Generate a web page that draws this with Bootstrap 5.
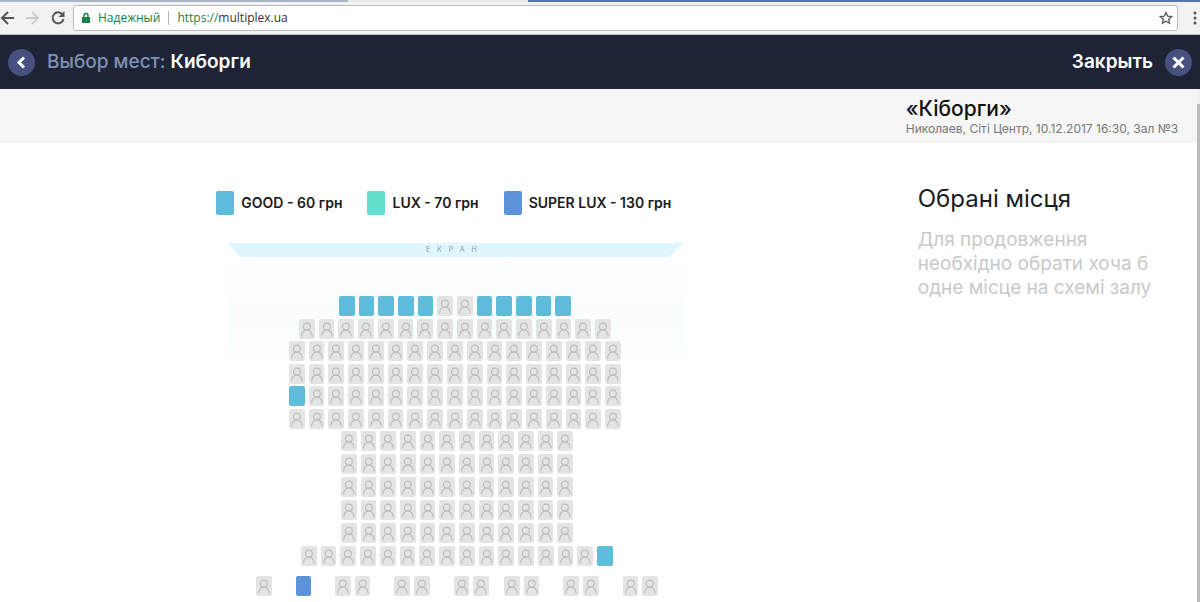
<!DOCTYPE html>
<html lang="uk">
<head>
<meta charset="utf-8">
<meta name="viewport" content="width=device-width, initial-scale=1">
<title>Выбор мест: Киборги</title>
<link href="https://cdn.jsdelivr.net/npm/bootstrap@5.3.0/dist/css/bootstrap.min.css" rel="stylesheet">
<style>
body{font-family:Inter,"Noto Sans",sans-serif;background:#fefefe;color:#1b1b1f;overflow:hidden}
svg{display:block}
/* browser window */
.tabstrip{height:2px;background:#e9ebee}
.tab-off{width:29%;background:#aab6c3}
.tab-rest{width:56%;background:#5577ad}
.toolbar{height:33px;background:#f2f2f2;border-bottom:1px solid #c3c3c8;font-family:"Open Sans",sans-serif;font-size:12px}
.toolbar button,.appbar button{border:0;background:none;padding:0}
.nav-tools{gap:10px}
.omnibox{height:26px;background:#fff;border:1px solid #bcbcbc;border-radius:3px;color:#1a8044}
.omnibox input{border:0;outline:0;padding:0;background:none;color:#333}
.sep{width:1px;height:14px;background:#b5b5b5}
/* site header */
.appbar{height:54px;background:#1f2336;font-size:19px}
.appbar h1{font-size:19px;font-weight:500;color:#7e93b3}
.appbar b{color:#fff;font-weight:600}
.appbar .disc{width:27px;height:27px;border-radius:50%;background:#47507f}
.infobar{height:54px;background:#f6f6f6}
.side{width:24%}
.infobar .side{width:25%;padding-left:8px}
.infobar h2{font-size:21px;line-height:24px;font-weight:500;color:#111}
.infobar p{font-size:12px;line-height:15px;color:#777}
.side h3{margin-top:41px;font-size:24px;line-height:30px;font-weight:400}
.side .hint{padding-top:14px;font-size:19px;line-height:24px;color:#c9c9c9}
.scrolltrack{width:3px;padding-top:15px;background:#f1f1f1}
.scrollthumb{background:#bcbcbc}
/* legend, screen, seats */
.legend{gap:25px;padding-right:22px;font-size:14px;font-weight:600;line-height:24px;color:#1b1b1b}
.legend div{gap:7px}
.swatch{width:18px;height:24px;border-radius:2px}
.good{background:#5fbcdb}
.lux{background:#62decf}
.super{background:#5c93db}
.screen-bar{width:456px;height:14px;margin-top:28px;background:#def6fd;clip-path:polygon(0 0,100% 0,97% 100%,3% 100%);font-size:7px;letter-spacing:7px;line-height:14px;color:#8a9ba3;text-align:center}
.glow{width:456px;padding-top:39px;background:linear-gradient(#fefefe,#fafdff 50px,#fbfeff 92px,#fefefe 110px)}
.block-a{height:133px}
.block-b{height:66px;padding-left:4px}
.mid{margin-top:2px}
.low{margin-top:3px}
.last{margin-top:10px;padding-left:4px}
.seats{display:flex;gap:4px}
.n12{width:232px}.n16{width:312px}.n17{width:332px}.nlast{width:402px}
.seat{flex:1 1 0;min-width:0;height:20px;border:0;padding:0;border-radius:2px;overflow:hidden}
.taken{background:#e4e4e4}
.taken svg{width:100%;height:20px}
.aisle{width:16px}
.aisle-s{width:7px}
</style>
</head>
<body>
<div class="d-flex flex-column min-vh-100">
  <div class="tabstrip d-flex justify-content-between"><div class="tab-off"></div><div class="tab-rest"></div></div>
  <div class="toolbar d-flex align-items-center">
    <div class="nav-tools d-flex">
      <button aria-label="Назад"><svg width="15" height="16" fill="none" stroke="#555" stroke-width="2"><path d="M14 8H2M8 2L2 8l6 6"/></svg></button>
      <button aria-label="Вперед"><svg width="15" height="16" fill="none" stroke="#ccc" stroke-width="2"><path d="M1 8h12M7 2l6 6-6 6"/></svg></button>
      <button aria-label="Обновить"><svg width="15" height="16" fill="none" stroke="#555" stroke-width="2"><path d="M12.500 4.500A5.500 5.500 0 1 0 13.500 9"/><path d="M14.500 1v6h-6z" fill="#555" stroke="none"/></svg></button>
    </div>
    <div class="omnibox d-flex align-items-center flex-grow-1 ms-2 ps-2 pe-1 me-2">
      <svg width="8" height="12" fill="none"><path d="M2 6V3.500a2 2 0 0 1 4 0V6" stroke="#1a8044" stroke-width="1.500"/><path d="M0 5h8v6H0z" fill="#1a8044"/></svg>
      <span class="ms-2">Надежный</span><span class="sep ms-2 me-1"></span>
      <label class="ms-1" for="url">https://</label><input id="url" class="flex-grow-1" value="multiplex.ua">
      <button aria-label="В закладки"><svg width="14" height="14" viewBox="0 0 14 14" fill="none" stroke="#555" stroke-width="1.300"><path d="M7 1.500l1.700 3.700 4 .4-3 2.700.9 4L7 10.200l-3.600 2.100.9-4-3-2.700 4-.4z"/></svg></button>
    </div>
    <button class="ms-1 flex-shrink-0" aria-label="Меню"><svg width="10" height="14" fill="#555"><circle cx="5" cy="2" r="1.500"/><circle cx="5" cy="7" r="1.500"/><circle cx="5" cy="12" r="1.500"/></svg></button>
  </div>
  <header class="appbar d-flex align-items-center justify-content-between ps-2 pe-2">
    <div class="d-flex align-items-center">
      <button class="disc me-2" aria-label="Назад"><svg width="27" height="27" fill="none" stroke="#fff" stroke-width="3"><path d="M16 8.500l-5 5 5 5"/></svg></button>
      <h1 class="m-0 ms-1">Выбор мест: <b>Киборги</b></h1>
    </div>
    <button class="d-flex align-items-center"><b class="me-2 pe-1">Закрыть</b><span class="disc"><svg width="27" height="27" fill="none" stroke="#fff" stroke-width="3"><path d="M8.500 8.500l10 10M18.500 8.500l-10 10"/></svg></span></button>
  </header>
  <div class="d-flex flex-grow-1">
    <div class="flex-grow-1">
      <div class="infobar d-flex justify-content-end"><div class="side pt-2">
        <h2 class="m-0">«Кіборги»</h2>
        <p class="m-0 text-nowrap">Николаев, Сіті Центр, 10.12.2017 16:30, Зал №3</p>
      </div></div>
      <div class="d-flex">
        <main class="flex-grow-1 d-flex flex-column align-items-center">
          <div class="legend d-flex mt-5">
            <div class="d-flex"><span class="swatch good"></span>GOOD - 60 грн</div>
            <div class="d-flex"><span class="swatch lux"></span>LUX - 70 грн</div>
            <div class="d-flex"><span class="swatch super"></span>SUPER LUX - 130 грн</div>
          </div>
          <div class="screen-bar">ЕКРАН</div>
          <div class="glow d-flex flex-column align-items-center">
            <div class="block-a d-flex flex-column align-items-center justify-content-between" data-rows="ggggg..ggggg|................|.................|.................|g................|................."></div>
          </div>
          <div class="block-b mid d-flex flex-column align-items-center justify-content-between" data-rows="............|............|............"></div>
          <div class="block-b low d-flex flex-column align-items-center justify-content-between" data-rows="............|............|...............g"></div>
          <div class="last" data-rows=". s .. .. ..-.. .. .."></div>
        </main>
        <aside class="side ps-2">
          <h3 class="mb-0">Обрані місця</h3>
          <p class="hint m-0">Для продовження<br>необхідно обрати хоча б<br>одне місце на схемі залу</p>
        </aside>
      </div>
    </div>
    <div class="scrolltrack d-flex"><div class="scrollthumb flex-grow-1"></div></div>
  </div>
</div>
<script>
const person='<svg viewBox="0 0 16 20" fill="none" stroke="#bdbdbd" stroke-width="1.2"><circle cx="8" cy="7.500" r="3.500"/><path d="M2.500 17.500c.4-4 2.300-6.300 5.500-6.300s5.100 2.300 5.500 6.300"/></svg>';
const cell={
  '.':`<button class="seat taken" disabled aria-label="Зайнято">${person}</button>`,
  g:'<button class="seat good" aria-label="GOOD"></button>',
  s:'<button class="seat super" aria-label="SUPER LUX"></button>',
  ' ':'<span class="aisle"></span>',
  '-':'<span class="aisle-s"></span>'
};
document.querySelectorAll('[data-rows]').forEach(block=>{
  block.innerHTML=block.dataset.rows.split('|').map(row=>
    `<div class="seats ${row.includes(' ')?'nlast':'n'+row.length}">${[...row].map(c=>cell[c]).join('')}</div>`).join('');
});
</script>
<script src="https://cdn.jsdelivr.net/npm/bootstrap@5.3.0/dist/js/bootstrap.bundle.min.js"></script>
</body>
</html>
